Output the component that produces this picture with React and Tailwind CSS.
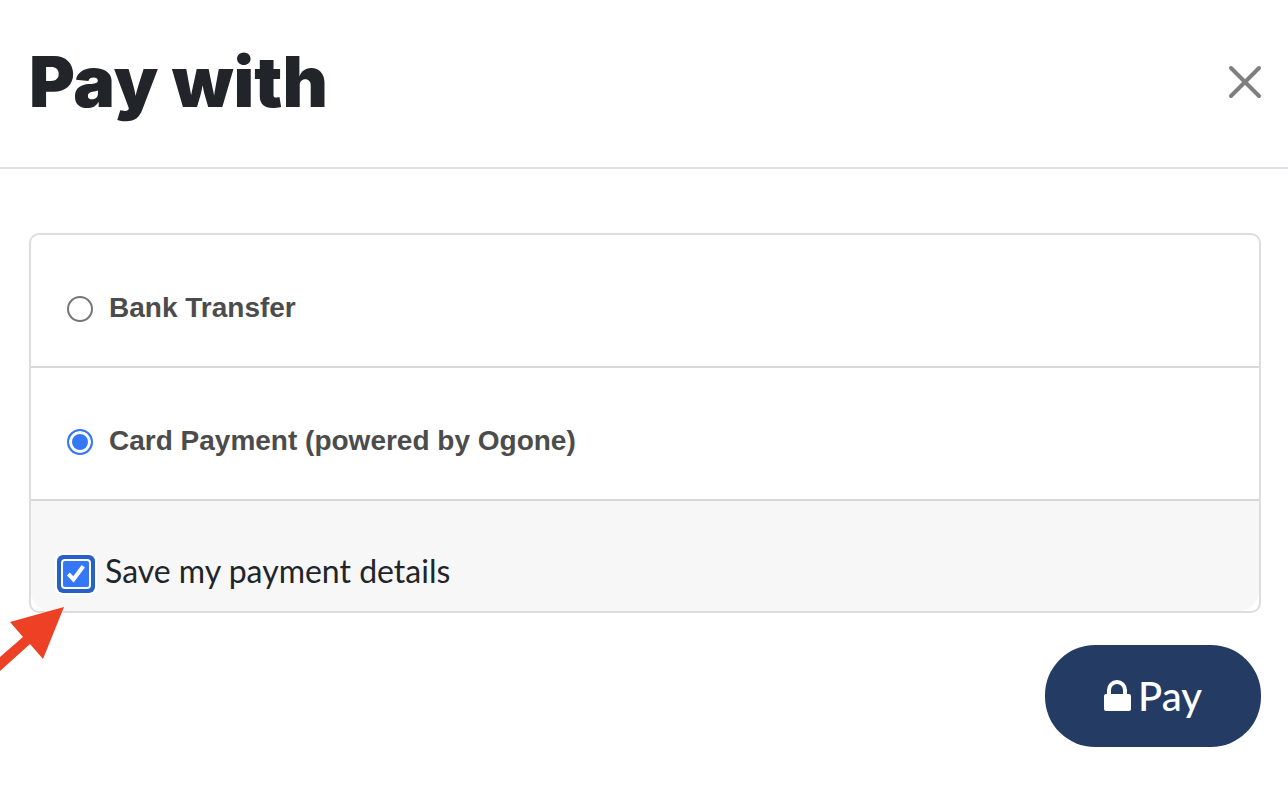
import { useState } from "react";

const METHODS = [
  { id: "transfer", label: "Bank Transfer" },
  { id: "card", label: "Card Payment (powered by Ogone)" },
];

const App = () => {
  const [method, setMethod] = useState("card");
  const [saveDetails, setSaveDetails] = useState(true);

  const handleSubmit = (event) => {
    event.preventDefault();
  };

  return (
    <div className="relative overflow-hidden bg-white text-[#212529] font-[Lato,sans-serif]">
      <header className="flex items-center justify-between h-[169px] pl-[29px] pr-6 pb-1 border-b-2 border-[#dee2e6]">
        <h1 className="text-[70px] leading-[80px] font-black font-[Inter,sans-serif]">
          Pay with
        </h1>
        <button type="button" aria-label="Close" className="text-[#7f7f7f]">
          <svg width="38" height="38" viewBox="0 0 38 38" fill="none" stroke="currentColor" strokeWidth="4" strokeLinecap="round">
            <path d="M5 5 33 33M33 5 5 33" />
          </svg>
        </button>
      </header>

      <form onSubmit={handleSubmit} className="pt-16 pb-12 pl-[29px] pr-[27px]">
        <div className="border-2 border-[#dddddd] rounded-[10px]">
          {METHODS.map((item) => (
            <label
              key={item.id}
              className="flex items-center gap-4 h-[133px] pt-4 pl-9 border-b-2 border-[#d8d8d8] text-[28px] leading-8 font-bold text-[#4c4c4c] font-['Liberation_Sans',Arial,sans-serif]"
            >
              <input
                type="radio"
                name="method"
                value={item.id}
                checked={method === item.id}
                onChange={() => setMethod(item.id)}
                className="appearance-none size-[26px] rounded-full border-2 border-[#767676] bg-white checked:border-[#3478f6] checked:bg-[#3478f6] checked:shadow-[inset_0_0_0_3px_#fff]"
              />
              <span className="pb-0.5">{item.label}</span>
            </label>
          ))}

          <label className="flex items-center gap-4 h-[110px] pt-9 pl-8 rounded-b-[20px] bg-[#f7f7f7] text-[32px] leading-10">
            <span className="relative size-[26px]">
              <input
                type="checkbox"
                checked={saveDetails}
                onChange={(e) => setSaveDetails(e.target.checked)}
                className="peer block appearance-none size-[26px] rounded-[2px] bg-white checked:bg-[#3478f6] shadow-[0_0_0_2px_#fff,0_0_0_6px_#2860c8,0_0_0_8px_#fff]"
              />
              <svg
                className="absolute inset-0 pointer-events-none hidden peer-checked:block"
                width="26"
                height="26"
                viewBox="0 0 26 26"
                fill="none"
                stroke="#fff"
                strokeWidth="4"
              >
                <path d="M5.400 13 10.500 18.300 20.300 5.200" />
              </svg>
            </span>
            <span className="pb-1.5">Save my payment details</span>
          </label>
        </div>

        <div className="flex justify-end mt-8">
          <button
            type="submit"
            className="flex items-center justify-center gap-1.5 w-[216px] h-[102px] rounded-[50px] bg-[#243c64] text-white text-[40px] leading-[48px] font-medium"
          >
            <svg width="28" height="34" viewBox="0 0 28 34" fill="none">
              <rect x="0" y="15" width="27" height="17" rx="2" fill="currentColor" />
              <path d="M5 16V11a8 8 0 0 1 16 0v5" stroke="currentColor" strokeWidth="4" />
            </svg>
            Pay
          </button>
        </div>
      </form>

      {/* pointer to the save checkbox */}
      <svg className="absolute left-0 top-[600px] pointer-events-none" width="70" height="80" viewBox="0 0 70 80" fill="#ec4125" aria-hidden="true">
        <path d="M64 7 10 22 23 37 0 57V71L30 44 43 59Z" />
      </svg>
    </div>
  );
};

export default App;
